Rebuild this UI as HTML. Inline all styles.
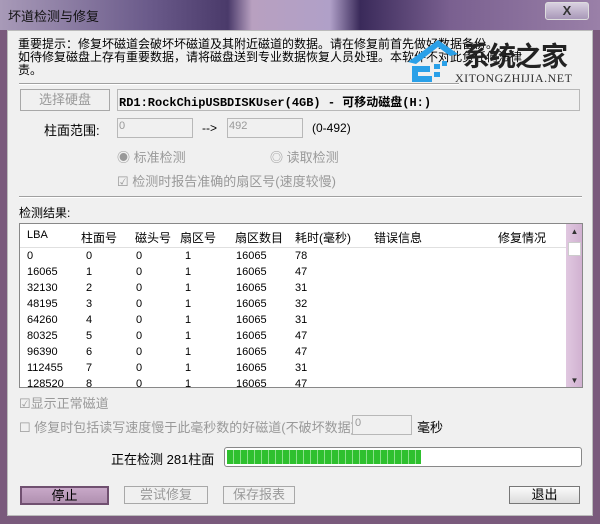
<!DOCTYPE html>
<html><head><meta charset="utf-8"><style>
*{margin:0;padding:0;box-sizing:border-box}
body{width:600px;height:524px;overflow:hidden;background:#7a5a7c;font-family:"Liberation Sans","Noto Sans CJK SC",sans-serif;font-size:12px;color:#000;position:relative}
.title{position:absolute;left:0;top:0;width:600px;height:30px;background:linear-gradient(90deg,#a89ab8 0%,#6a5a8a 25%,#4a3a6a 38%,#b8a0c0 42%,#b0a0c8 55%,#3a2a5a 60%,#7a6090 75%,#9a80a8 100%)}
.title span{position:absolute;left:8px;top:6px;font-size:13px;color:#111}
.close{position:absolute;left:545px;top:2px;width:44px;height:18px;border:1px solid #ddd;border-radius:3px;background:linear-gradient(#d8d0e0,#a898b8);color:#333;text-align:center;font-size:13px;line-height:16px;font-weight:bold}
.panel{position:absolute;left:7px;top:30px;width:586px;height:486px;background:#f0f0f0;border:1px solid #bbb}
.a{position:absolute;white-space:nowrap}
.g{color:#999}
.sep{position:absolute;left:19px;width:563px;height:2px;border-top:1px solid #a0a0a0;border-bottom:1px solid #fff}
.box{position:absolute;border:1px solid #b8b8b8;background:#f0f0f0}
.btn{position:absolute;border:1px solid #a8a8a8;background:#f0f0f0;text-align:center;font-size:13px;color:#999}
.list{position:absolute;left:19px;top:223px;width:564px;height:165px;border:1px solid #888;background:#fff;overflow:hidden}
.hdr{position:absolute;left:0;top:0;width:546px;height:24px;border-bottom:1px solid #e0e0e0}
.hdr div,.row div{position:absolute}
.hdr div{top:5px;font-size:12px}
.row{position:absolute;left:0;width:546px;height:16px;font-size:11px;line-height:16px}
.sb{position:absolute;left:546px;top:0;width:17px;height:165px;background:linear-gradient(90deg,#e0c8e0,#d0b0d0)}
</style></head><body>
<div class="title"><span>坏道检测与修复</span><div class="close">X</div></div>
<div class="panel"></div>
<div class="a" style="left:18px;top:38px;font-size:12px;line-height:13px">重要提示：修复坏磁道会破坏坏磁道及其附近磁道的数据。请在修复前首先做好数据备份。<br>如待修复磁盘上存有重要数据，请将磁盘送到专业数据恢复人员处理。本软件不对此负任何法律<br>责。</div>
<svg class="a" style="left:388px;top:34px" width="80" height="52"><path d="M20 28 L50 6 L70 20 L62 22 L50 13 L28 30 Z" fill="#2aa0e8"/><path d="M24 32 H42 V38 H30 V42 H44 V48 H24 Z" fill="#2aa0e8"/><rect x="46" y="30" width="6" height="5" fill="#2aa0e8"/><rect x="54" y="27" width="5" height="5" fill="#2aa0e8"/><rect x="46" y="38" width="6" height="5" fill="#2aa0e8"/></svg>
<div class="a" style="left:463px;top:42px;font-size:27px;line-height:30px;font-weight:bold;color:#222;letter-spacing:-1px">系统之家</div>
<div class="a" style="left:455px;top:71px;font-family:'Liberation Serif',serif;font-size:12px;color:#333;letter-spacing:0.5px">XITONGZHIJIA.NET</div>
<div class="sep" style="top:83px;width:440px"></div>
<div class="btn" style="left:20px;top:89px;width:90px;height:22px;line-height:20px">选择硬盘</div>
<div class="box" style="left:117px;top:89px;width:463px;height:22px"></div>
<div class="a" style="left:119px;top:93px;font-family:'Liberation Mono','Noto Sans CJK SC',monospace;font-weight:bold;font-size:12px">RD1:RockChipUSBDISKUser(4GB) - 可移动磁盘(H:)</div>
<div class="a" style="left:44px;top:120px;font-size:13px">柱面范围:</div>
<div class="box" style="left:117px;top:118px;width:76px;height:20px"></div>
<div class="a g" style="left:119px;top:120px;font-size:11px">0</div>
<div class="a" style="left:202px;top:121px;font-size:12px">--&gt;</div>
<div class="box" style="left:227px;top:118px;width:76px;height:20px"></div>
<div class="a g" style="left:229px;top:120px;font-size:11px">492</div>
<div class="a" style="left:312px;top:121px;font-size:12px">(0-492)</div>
<div class="a g" style="left:117px;top:147px;font-size:13px">◉ 标准检测</div>
<div class="a g" style="left:270px;top:147px;font-size:13px">◎ 读取检测</div>
<div class="a g" style="left:117px;top:171px;font-size:13px">☑ 检测时报告准确的扇区号(速度较慢)</div>
<div class="sep" style="top:196px"></div>
<div class="a" style="left:19px;top:204px;font-size:12px">检测结果:</div>
<div class="list">
<div class="hdr"><div style="left:7px;font-size:11px">LBA</div><div style="left:61px">柱面号</div><div style="left:115px">磁头号</div><div style="left:160px">扇区号</div><div style="left:215px">扇区数目</div><div style="left:275px">耗时(毫秒)</div><div style="left:354px">错误信息</div><div style="left:478px">修复情况</div></div>
<div class="row" style="top:24px"><div style="left:7px">0</div><div style="left:66px">0</div><div style="left:116px">0</div><div style="left:165px">1</div><div style="left:216px">16065</div><div style="left:275px">78</div></div>
<div class="row" style="top:40px"><div style="left:7px">16065</div><div style="left:66px">1</div><div style="left:116px">0</div><div style="left:165px">1</div><div style="left:216px">16065</div><div style="left:275px">47</div></div>
<div class="row" style="top:56px"><div style="left:7px">32130</div><div style="left:66px">2</div><div style="left:116px">0</div><div style="left:165px">1</div><div style="left:216px">16065</div><div style="left:275px">31</div></div>
<div class="row" style="top:72px"><div style="left:7px">48195</div><div style="left:66px">3</div><div style="left:116px">0</div><div style="left:165px">1</div><div style="left:216px">16065</div><div style="left:275px">32</div></div>
<div class="row" style="top:88px"><div style="left:7px">64260</div><div style="left:66px">4</div><div style="left:116px">0</div><div style="left:165px">1</div><div style="left:216px">16065</div><div style="left:275px">31</div></div>
<div class="row" style="top:104px"><div style="left:7px">80325</div><div style="left:66px">5</div><div style="left:116px">0</div><div style="left:165px">1</div><div style="left:216px">16065</div><div style="left:275px">47</div></div>
<div class="row" style="top:120px"><div style="left:7px">96390</div><div style="left:66px">6</div><div style="left:116px">0</div><div style="left:165px">1</div><div style="left:216px">16065</div><div style="left:275px">47</div></div>
<div class="row" style="top:136px"><div style="left:7px">112455</div><div style="left:66px">7</div><div style="left:116px">0</div><div style="left:165px">1</div><div style="left:216px">16065</div><div style="left:275px">31</div></div>
<div class="row" style="top:152px"><div style="left:7px">128520</div><div style="left:66px">8</div><div style="left:116px">0</div><div style="left:165px">1</div><div style="left:216px">16065</div><div style="left:275px">47</div></div>
<div class="sb"><div style="position:absolute;left:0;top:0;width:17px;height:16px;text-align:center;font-size:8px;line-height:16px;color:#333">▲</div><div style="position:absolute;left:2px;top:18px;width:13px;height:14px;background:#fff;border:1px solid #ccc"></div><div style="position:absolute;left:0;top:149px;width:17px;height:16px;text-align:center;font-size:8px;line-height:16px;color:#333">▼</div></div>
</div>
<div class="a g" style="left:19px;top:393px;font-size:13px">☑显示正常磁道</div>
<div class="a g" style="left:19px;top:417px;font-size:13px">☐ 修复时包括读写速度慢于此毫秒数的好磁道(不破坏数据):</div>
<div class="box" style="left:352px;top:415px;width:60px;height:20px"></div>
<div class="a g" style="left:355px;top:417px;font-size:11px">0</div>
<div class="a" style="left:417px;top:417px;font-size:13px">毫秒</div>
<div class="a" style="left:111px;top:449px;font-size:13px">正在检测 281柱面</div>
<div class="a" style="left:224px;top:447px;width:358px;height:20px;border:1px solid #888;border-radius:3px;background:#fff"><div style="position:absolute;left:2px;top:2px;width:194px;height:14px;background:repeating-linear-gradient(90deg,#2ec02e 0,#2ec02e 6px,#8be08b 6px,#8be08b 7px)"></div></div>
<div class="btn" style="left:20px;top:486px;width:89px;height:19px;line-height:16px;color:#000;background:linear-gradient(#c8a8c8,#b090b0);border:2px solid #705070">停止</div>
<div class="btn" style="left:124px;top:486px;width:84px;height:18px;line-height:16px">尝试修复</div>
<div class="btn" style="left:223px;top:486px;width:72px;height:18px;line-height:16px">保存报表</div>
<div class="btn" style="left:509px;top:486px;width:71px;height:18px;line-height:16px;color:#000;border-color:#777;background:linear-gradient(#fafafa,#dcdcdc)">退出</div>
</body></html>
